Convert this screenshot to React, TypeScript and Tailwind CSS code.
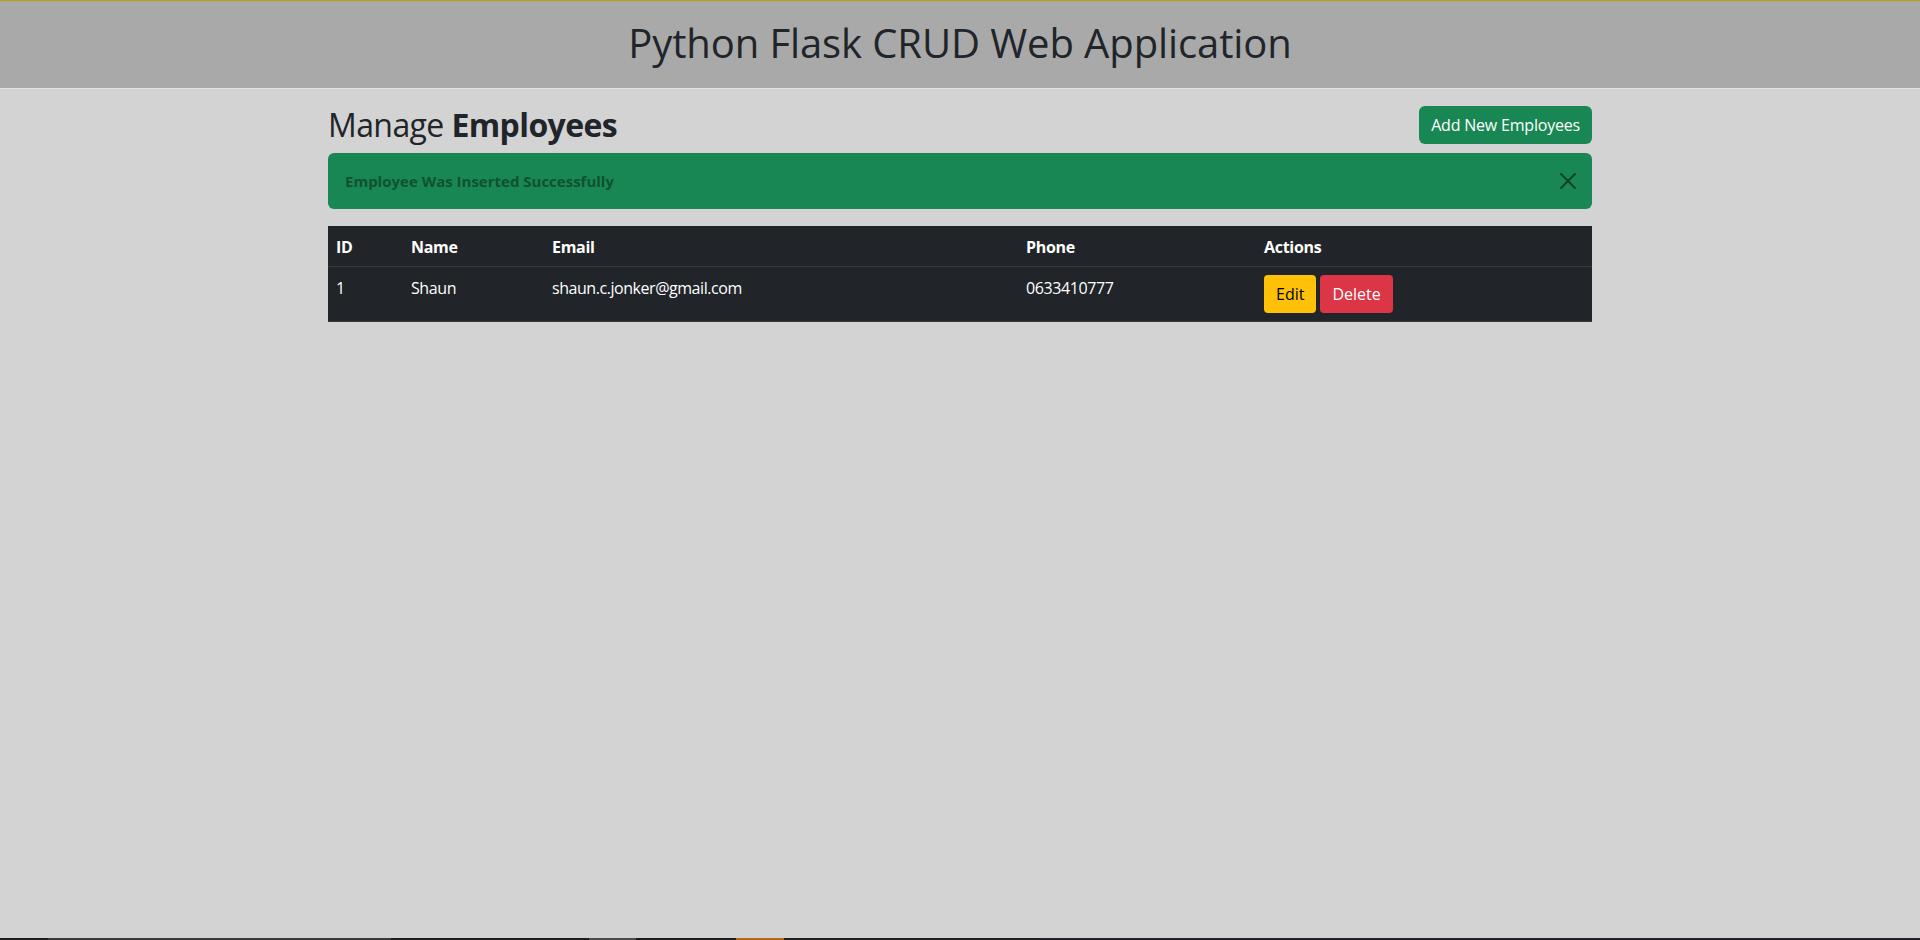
import React from "react";

const font = { fontFamily: '"Open Sans", "Noto Sans", sans-serif' };

export default function App() {
  return (
    <div
      className="min-h-screen flex flex-col bg-[#d3d3d3] text-[#212529]"
      style={font}
    >
      <header className="h-[89px] bg-[#a9a9a9] border-t border-t-[#b8a000] border-b border-b-[#e2e2e2] flex items-center justify-center">
        <h1 className="text-[40px] leading-[48px] font-medium text-[#212529] -mt-[4px] tracking-[-0.1px]">
          Python Flask CRUD Web Application
        </h1>
      </header>

      <main className="w-[1264px] mx-auto">
        <div className="flex items-center justify-between mt-[17px]">
          <h2 className="text-[32px] leading-[38px] font-medium tracking-[-0.6px]">
            Manage <b className="font-bold">Employees</b>
          </h2>
          <button className="h-[38px] px-[12px] rounded-[6px] bg-[#198754] text-white text-[16px] leading-[24px] tracking-[-0.2px]">
            Add New Employees
          </button>
        </div>

        <div className="mt-[9px] h-[56px] rounded-[6px] bg-[#198754] flex items-center justify-between pl-[17px] pr-[16px]">
          <strong className="text-[15px] font-bold text-[#0f5132]">
            Employee Was Inserted Successfully
          </strong>
          <svg viewBox="0 0 16 16" className="w-[16px] h-[16px]" fill="#000" opacity={0.5}>
            <path d="M.293.293a1 1 0 0 1 1.414 0L8 6.586 14.293.293a1 1 0 1 1 1.414 1.414L9.414 8l6.293 6.293a1 1 0 0 1-1.414 1.414L8 9.414l-6.293 6.293a1 1 0 0 1-1.414-1.414L6.586 8 .293 1.707a1 1 0 0 1 0-1.414z" />
          </svg>
        </div>

        <table className="mt-[17px] w-full table-fixed bg-[#212529] text-white text-[16px] leading-[24px] text-left">
          <thead>
            <tr className="border-b border-[#373b3e] tracking-[-0.3px]">
              <th className="w-[75px] pt-[9px] pb-[7px] px-[8px] font-bold">ID</th>
              <th className="w-[141px] pt-[9px] pb-[7px] px-[8px] font-bold">Name</th>
              <th className="w-[474px] pt-[9px] pb-[7px] px-[8px] font-bold">Email</th>
              <th className="w-[238px] pt-[9px] pb-[7px] px-[8px] font-bold">Phone</th>
              <th className="w-[336px] pt-[9px] pb-[7px] px-[8px] font-bold">Actions</th>
            </tr>
          </thead>
          <tbody>
            <tr className="border-b border-[#373b3e] align-top">
              <td className="pt-[9px] pb-[8px] px-[8px] tracking-[-0.4px]">1</td>
              <td className="pt-[9px] pb-[8px] px-[8px] tracking-[-0.4px]">Shaun</td>
              <td className="pt-[9px] pb-[8px] px-[8px] tracking-[-0.45px]">shaun.c.jonker@gmail.com</td>
              <td className="pt-[9px] pb-[8px] px-[8px] tracking-[-0.4px]">0633410777</td>
              <td className="pt-[8px] pb-[8px] px-[8px]">
                <div className="flex gap-[4px]">
                  <button className="h-[38px] px-[12px] rounded-[4px] bg-[#ffc107] text-black">
                    Edit
                  </button>
                  <button className="h-[38px] px-[12px] rounded-[4px] bg-[#dc3545] text-white">
                    Delete
                  </button>
                </div>
              </td>
            </tr>
          </tbody>
        </table>
      </main>

      <div className="flex-1" />

      <div className="h-[2px] flex">
        <div className="w-[48px] bg-[#1c1c1c]" />
        <div className="w-[343px] bg-[#3a3a3a]" />
        <div className="w-[198px] bg-[#1c1c1c]" />
        <div className="w-[47px] bg-[#4a4a4a]" />
        <div className="w-[100px] bg-[#1c1c1c]" />
        <div className="w-[48px] bg-[#b5651d]" />
        <div className="w-[256px] bg-[#1f1f1f]" />
        <div className="flex-1 bg-[#22222e]" />
      </div>
    </div>
  );
}
